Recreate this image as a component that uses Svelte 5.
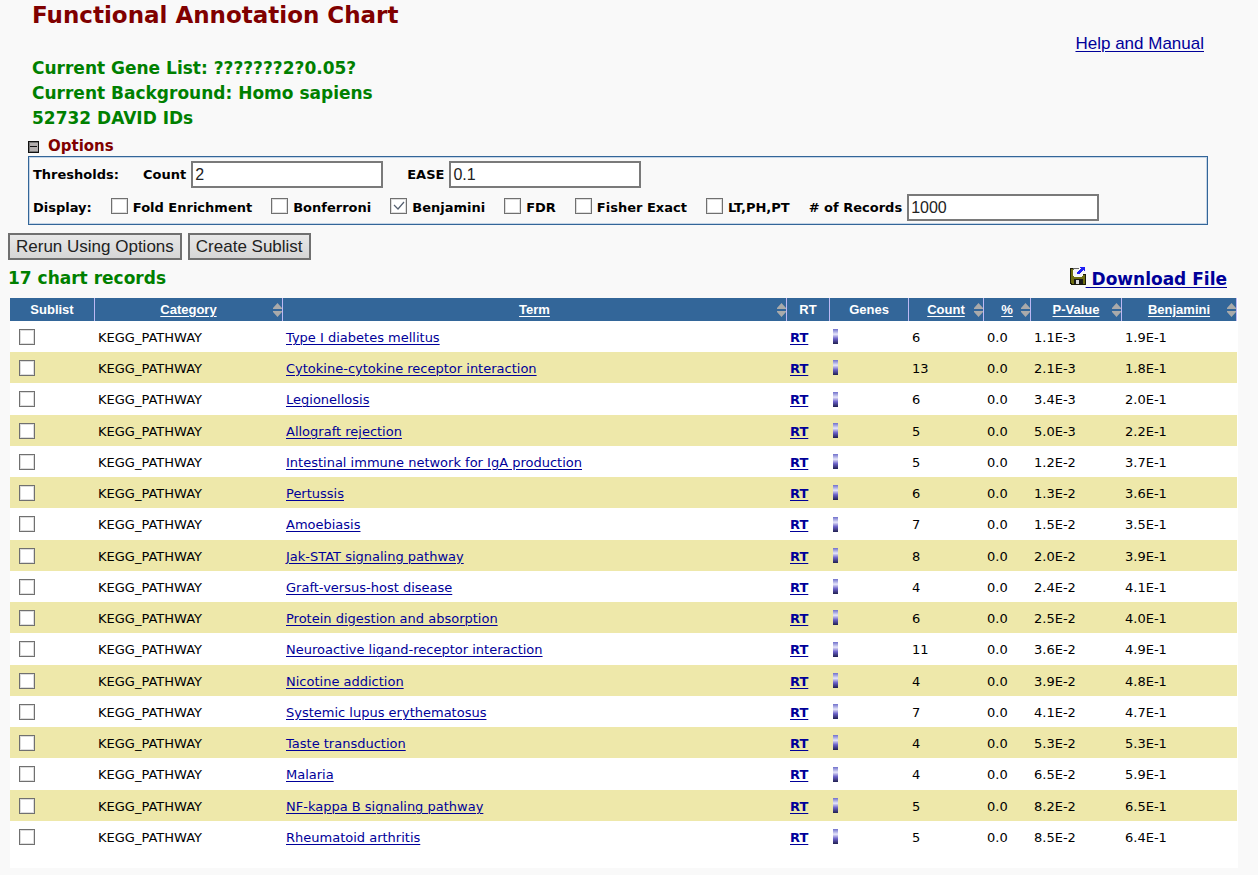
<script>
  const columns = [
    { name: 'Sublist', cls: 'c-sublist' },
    { name: 'Category', cls: 'c-category', sort: true },
    { name: 'Term', cls: 'c-term', sort: true },
    { name: 'RT', cls: 'c-rt' },
    { name: 'Genes', cls: 'c-genes' },
    { name: 'Count', cls: 'c-count', sort: true },
    { name: '%', cls: 'c-percent', sort: true },
    { name: 'P-Value', cls: 'c-pvalue', sort: true },
    { name: 'Benjamini', cls: 'c-benjamini', sort: true }
  ];

  const rows = [
    ['Type I diabetes mellitus', 6, '1.1E-3', '1.9E-1'],
    ['Cytokine-cytokine receptor interaction', 13, '2.1E-3', '1.8E-1'],
    ['Legionellosis', 6, '3.4E-3', '2.0E-1'],
    ['Allograft rejection', 5, '5.0E-3', '2.2E-1'],
    ['Intestinal immune network for IgA production', 5, '1.2E-2', '3.7E-1'],
    ['Pertussis', 6, '1.3E-2', '3.6E-1'],
    ['Amoebiasis', 7, '1.5E-2', '3.5E-1'],
    ['Jak-STAT signaling pathway', 8, '2.0E-2', '3.9E-1'],
    ['Graft-versus-host disease', 4, '2.4E-2', '4.1E-1'],
    ['Protein digestion and absorption', 6, '2.5E-2', '4.0E-1'],
    ['Neuroactive ligand-receptor interaction', 11, '3.6E-2', '4.9E-1'],
    ['Nicotine addiction', 4, '3.9E-2', '4.8E-1'],
    ['Systemic lupus erythematosus', 7, '4.1E-2', '4.7E-1'],
    ['Taste transduction', 4, '5.3E-2', '5.3E-1'],
    ['Malaria', 4, '6.5E-2', '5.9E-1'],
    ['NF-kappa B signaling pathway', 5, '8.2E-2', '6.5E-1'],
    ['Rheumatoid arthritis', 5, '8.5E-2', '6.4E-1']
  ];

  let display = $state([
    { label: 'Fold Enrichment', on: false },
    { label: 'Bonferroni', on: false },
    { label: 'Benjamini', on: true },
    { label: 'FDR', on: false },
    { label: 'Fisher Exact', on: false },
    { label: 'LT,PH,PT', on: false }
  ]);
  let count = $state('2');
  let ease = $state('0.1');
  let records = $state('1000');
  let open = $state(true);
</script>

<main>
  <header>
    <h1>Functional Annotation Chart</h1>
    <a class="help" href="#help">Help and Manual</a>
    <div class="summary">
      <p>Current Gene List: ???????2?0.05?</p>
      <p>Current Background: Homo sapiens</p>
      <p>52732 DAVID IDs</p>
    </div>
  </header>

  <section class="options">
    <button class="toggle" type="button" aria-expanded={open} onclick={() => (open = !open)}>
      <svg width="11" height="12" viewBox="0 0 11 12" shape-rendering="crispEdges" aria-hidden="true">
        <rect width="11" height="12" fill="#111" />
        <rect x="1" y="1" width="9" height="10" fill="#777" />
        <rect x="2" y="2" width="8" height="8" fill="#b4afaf" />
        <rect x="2" y="5" width="7" height="1" fill="#111" />
      </svg>
      Options
    </button>
    {#if open}
      <div class="panel">
        <div class="line">
          <span>Thresholds:</span>
          <label class="field">Count <input type="text" bind:value={count} /></label>
          <label class="field">EASE <input type="text" bind:value={ease} /></label>
        </div>
        <div class="line display">
          <span>Display:</span>
          {#each display as item}
            <label class="check"><input type="checkbox" bind:checked={item.on} />{item.label}</label>
          {/each}
          <label class="field"># of Records <input type="text" bind:value={records} /></label>
        </div>
      </div>
    {/if}
  </section>

  <div class="actions">
    <button type="button">Rerun Using Options</button>
    <button type="button">Create Sublist</button>
  </div>

  <div class="caption">
    <h2>17 chart records</h2>
    <a href="#download">
      <svg width="16" height="18" viewBox="0 0 16 18" shape-rendering="crispEdges" aria-hidden="true">
        <path d="M0 1H3V10H13V7H16V18H1V17H0Z" fill="#1a1a08" />
        <path d="M1 2H3V9H4V10H12V9H13V8H15V17H13V12H4V17H2V16H1Z" fill="#6e6e10" />
        <path d="M4 2H15V6H12V9H4Z" fill="#f4f4f4" />
        <path d="M3 1H9V2H4V3H3Z" fill="#666" />
        <path d="M4 12H13V17H4Z" fill="#1a1a1a" />
        <path d="M6 13H9V17H6Z" fill="#ddd" />
        <path d="M10 0H15V4H14V3H13V4H12V5H11V6H10V7H7V5H8V4H9V3H10V2H11V1H10Z" fill="#1e1ef5" />
      </svg><span>&nbsp;Download File</span>
    </a>
  </div>

  <div class="sheet">
    <table>
      <thead>
        <tr>
          {#each columns as col}
            <th class={col.cls} scope="col">
              {#if col.sort}
                <a href="#sort">{col.name}</a>
                <svg class="sort" width="9" height="14" viewBox="0 0 9 14" aria-hidden="true">
                  <path d="M4.500 0L9 5V6H0V5Z M0 8H9V9L4.500 14L0 9Z" fill="#aaa" />
                </svg>
              {:else}
                {col.name}
              {/if}
            </th>
          {/each}
        </tr>
      </thead>
      <tbody>
        {#each rows as [term, n, p, b]}
          <tr>
            <td class="pick"><input type="checkbox" aria-label={term} /></td>
            <td>KEGG_PATHWAY</td>
            <td><a href="#term">{term}</a></td>
            <td><a class="rt" href="#related">RT</a></td>
            <td><a class="bar" href="#genes" aria-label="Genes"></a></td>
            <td>{n}</td>
            <td>0.0</td>
            <td>{p}</td>
            <td>{b}</td>
          </tr>
        {/each}
      </tbody>
    </table>
  </div>
</main>

<style>
  :global(body) {
    background: #f9f9f9;
  }
  main {
    padding: 0 20px 7px 8px;
    font-family: Verdana, 'DejaVu Sans', sans-serif;
    font-size: 13px;
    color: #000;
  }
  h1, h2, p {
    margin: 0;
  }
  a {
    color: #000099;
    text-underline-offset: 2px;
    text-decoration-thickness: 1px;
  }
  header {
    display: grid;
    grid-template-columns: 1fr auto;
    padding: 0 26px 0 24px;
  }
  h1 {
    grid-column: 1 / 3;
    font-size: 23px;
    line-height: 30px;
    color: #800000;
  }
  .summary {
    grid-column: 1;
    grid-row: 2;
    padding-top: 26px;
    font-size: 17px;
    font-weight: bold;
    line-height: 25px;
    color: #008000;
  }
  .help {
    grid-column: 2;
    grid-row: 2;
    padding-top: 4px;
    padding-right: 8px;
    font: 17px/20px 'Liberation Sans', Arial, sans-serif;
  }
  .options {
    padding: 6px 30px 0 20px;
  }
  .toggle {
    display: flex;
    align-items: center;
    gap: 9px;
    padding: 0;
    border: 0;
    background: none;
    font: bold 15px/19px Verdana, 'DejaVu Sans', sans-serif;
    color: #800000;
  }
  .panel {
    display: grid;
    gap: 6px;
    padding: 4px 4px 3px;
    border: 1px solid #336699;
    box-shadow: inset 0 0 0 1px #c6d5e6;
    font-weight: bold;
  }
  .line {
    display: flex;
    align-items: center;
    gap: 24px;
    line-height: 17px;
    white-space: nowrap;
  }
  .display {
    gap: 19px;
  }
  .field {
    display: flex;
    align-items: center;
    gap: 5px;
  }
  .check {
    display: flex;
    align-items: center;
    gap: 5px;
  }
  .check input {
    margin-bottom: 4px;
  }
  input[type='text'] {
    box-sizing: border-box;
    width: 192px;
    height: 27px;
    padding: 0 2px;
    border: 2px solid #7a7a7a;
    background: #fff;
    font: 16px 'Liberation Sans', Arial, sans-serif;
    color: #222;
  }
  input[type='checkbox'] {
    appearance: none;
    box-sizing: border-box;
    flex: none;
    width: 16px;
    height: 16px;
    margin-top: 0;
    margin-left: 0;
    margin-right: 0;
    border: 1px solid #707070;
    box-shadow: inset 0 0 0 1px #ddd;
    background: #fff;
  }
  .check input[type='checkbox'] {
    width: 17px;
  }
  input[type='checkbox']:checked {
    background: #fff url("data:image/svg+xml,%3Csvg xmlns='http://www.w3.org/2000/svg' viewBox='0 0 14 14'%3E%3Cpath d='M2 6l4 4 6-7' fill='none' stroke='%23556070' stroke-width='1.2'/%3E%3C/svg%3E") center / 14px no-repeat;
  }
  .actions {
    display: flex;
    gap: 6px;
    padding-top: 8px;
  }
  .actions button {
    box-sizing: border-box;
    height: 27px;
    padding: 0 6px;
    border: 2px solid #707070;
    background: linear-gradient(#e8e8e8, #d6d6d6);
    font: 17px 'Liberation Sans', Arial, sans-serif;
    color: #222;
  }
  .caption {
    display: flex;
    justify-content: space-between;
    align-items: center;
    height: 38px;
    padding-right: 11px;
    font-size: 17px;
  }
  h2 {
    padding-bottom: 2px;
    font-size: 17px;
    color: #008000;
  }
  .caption a {
    display: flex;
    align-items: center;
    font-weight: bold;
    text-decoration: none;
  }
  .caption a span {
    text-decoration: underline;
    text-underline-offset: 2px;
    text-decoration-thickness: 1px;
  }
  .caption svg {
    margin-bottom: 6px;
  }
  .sheet {
    margin-left: 2px;
    padding: 0 1px 16px 0;
    background: #fff;
  }
  table {
    width: 100%;
    table-layout: fixed;
    border-collapse: separate;
    border-spacing: 0;
  }
  th {
    position: relative;
    box-sizing: border-box;
    height: 23px;
    padding: 0;
    border-right: 1px solid #bcb8f4;
    background: #336699;
    font: bold 13px/20px 'Liberation Sans', Arial, sans-serif;
    color: #fff;
    text-align: center;
  }
  th a {
    color: #fff;
  }
  .sort {
    position: absolute;
    right: 0;
    top: 5px;
  }
  .c-sublist { width: 85px; }
  .c-category { width: 188px; }
  .c-rt { width: 43px; }
  .c-genes { width: 79px; }
  .c-count { width: 75px; }
  .c-percent { width: 47px; }
  .c-pvalue { width: 91px; }
  .c-benjamini { width: 115px; }
  td {
    box-sizing: border-box;
    height: 31px;
    padding: 2px 3px 0;
    line-height: 20px;
    white-space: nowrap;
  }
  tbody tr:nth-child(4n + 3) td {
    height: 32px;
  }
  tbody tr:nth-child(even) {
    background: #eee8aa;
  }
  .pick {
    padding: 0 0 0 9px;
  }
  .pick input {
    display: block;
    margin-bottom: 0;
  }
  .rt {
    font-weight: bold;
  }
  .bar {
    display: block;
    width: 5px;
    height: 15px;
    margin-bottom: 2px;
    background: linear-gradient(#7070cc, #e6e6fa 35%, #6a60c8 65%, #202050);
  }
</style>
